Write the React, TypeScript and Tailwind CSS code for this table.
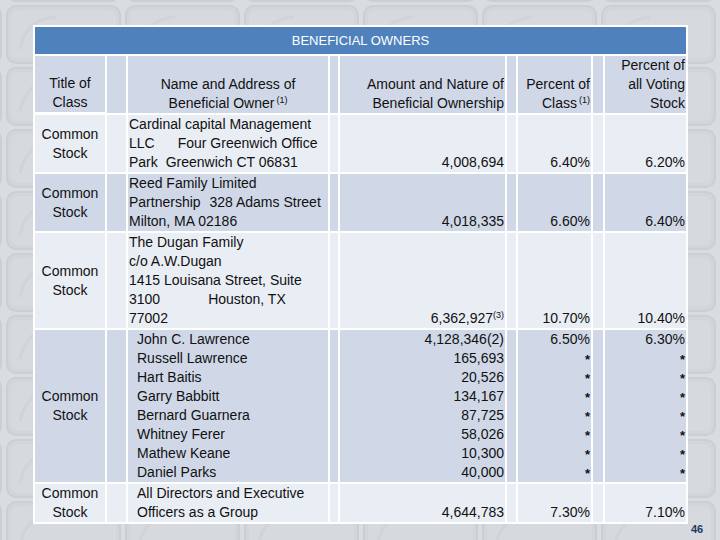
import React from "react";

const F = { fontFamily: '"Liberation Sans", Arial, sans-serif' };

function Bg() {
  return (
    <svg className="absolute inset-0" width="720" height="540">
      <defs>
        <pattern id="tiles" x="6" y="5" width="119" height="62" patternUnits="userSpaceOnUse">
          <rect x="1" y="1" width="113" height="57" rx="9" fill="#cdd1d7" stroke="#bfc4cb" strokeWidth="2" />
          <rect x="5" y="5" width="105" height="49" rx="7" fill="#d3d6dc" />
          <path d="M14 44 Q20 14 50 12" stroke="#c8ccd2" strokeWidth="3" fill="none" />
        </pattern>
      </defs>
      <rect width="720" height="540" fill="#d9dce0" />
      <rect width="720" height="540" fill="url(#tiles)" opacity="0.55" />
    </svg>
  );
}

const dark = "bg-[#d0d8e8]";
const light = "bg-[#e9edf4]";

function Sup({ t, tight = false }: { t: string; tight?: boolean }) {
  return <sup className={"text-[9px] -top-[5px] " + (tight ? "ml-0" : "ml-[2px]")}>{t}</sup>;
}

function Lines({ items, className = "" }: { items: React.ReactNode[]; className?: string }) {
  return (
    <>
      {items.map((it, i) => (
        <div key={i} className={"h-[19px] whitespace-pre " + className}>
          {it}
        </div>
      ))}
    </>
  );
}

function Row({
  bg,
  h,
  c1,
  c3,
  c5,
  c7,
  c9,
  top = false,
  indent = false,
}: {
  bg: string;
  h: string;
  c1: React.ReactNode;
  c3: React.ReactNode;
  c5: React.ReactNode;
  c7: React.ReactNode;
  c9: React.ReactNode;
  top?: boolean;
  indent?: boolean;
}) {
  const v = top ? "justify-start" : "justify-end";
  return (
    <>
      <div className={`${bg} ${h} flex flex-col justify-center items-center text-center`}>{c1}</div>
      <div className={`${bg} ${h}`} />
      <div className={`${bg} ${h} flex flex-col ${indent ? "pl-[9px]" : "pl-[1px]"}`}>{c3}</div>
      <div className={`${bg} ${h}`} />
      <div className={`${bg} ${h} flex flex-col ${v} items-end pr-[1px]`}>{c5}</div>
      <div className={`${bg} ${h}`} />
      <div className={`${bg} ${h} flex flex-col ${v} items-end pr-[1px]`}>{c7}</div>
      <div className={`${bg} ${h}`} />
      <div className={`${bg} ${h} flex flex-col ${v} items-end pr-[1px]`}>{c9}</div>
    </>
  );
}

const common = <Lines items={["Common", "Stock"]} />;

export default function App() {
  const star = <span className="relative top-[1px] text-[13px] font-bold">*</span>;
  return (
    <div className="relative w-[720px] h-[540px] overflow-hidden" style={F}>
      <Bg />
      <div className="relative pt-[25px] pl-[33px]">
        <div className="w-[655px] bg-white p-[2px] text-[14px] leading-[19px] text-[#111]">
          <div className="h-[27px] bg-[#4f81bd] text-white text-[13px] flex items-center justify-center mb-[2px]">
            BENEFICIAL OWNERS
          </div>
          <div className="grid grid-cols-[70px_19px_200px_8px_165px_9px_73px_10px_81px] gap-[2px]">
            {/* header */}
            <div className={`${dark} h-[56px] flex flex-col justify-end items-center text-center`}>
              <Lines items={["Title of", "Class"]} />
            </div>
            <div className={`${dark}`} />
            <div className={`${dark} flex flex-col justify-end items-center text-center`}>
              <Lines items={["Name and Address of", <>Beneficial Owner<Sup t="(1)" /></>]} />
            </div>
            <div className={`${dark}`} />
            <div className={`${dark} flex flex-col justify-end items-end pr-[1px] text-right`}>
              <Lines items={["Amount and Nature of", "Beneficial Ownership"]} />
            </div>
            <div className={`${dark}`} />
            <div className={`${dark} flex flex-col justify-end items-end pr-[1px] text-right`}>
              <Lines items={["Percent of", <>Class<Sup t="(1)" /></>]} />
            </div>
            <div className={`${dark}`} />
            <div className={`${dark} flex flex-col justify-end items-end pr-[1px] text-right`}>
              <Lines items={["Percent of", "all Voting", "Stock"]} />
            </div>

            <Row
              bg={light}
              h="h-[57px]"
              c1={common}
              c3={
                <Lines
                  items={[
                    "Cardinal capital Management",
                    <>LLC<span className="inline-block w-[23px]" />Four Greenwich Office</>,
                    <>Park<span className="inline-block w-[4px]" /> Greenwich CT 06831</>,
                  ]}
                />
              }
              c5={<Lines items={["4,008,694"]} />}
              c7={<Lines items={["6.40%"]} />}
              c9={<Lines items={["6.20%"]} />}
            />
            <Row
              bg={dark}
              h="h-[57px]"
              c1={common}
              c3={
                <Lines
                  items={[
                    "Reed Family Limited",
                    <>Partnership<span className="inline-block w-[5px]" /> 328 Adams Street</>,
                    "Milton, MA 02186",
                  ]}
                />
              }
              c5={<Lines items={["4,018,335"]} />}
              c7={<Lines items={["6.60%"]} />}
              c9={<Lines items={["6.40%"]} />}
            />
            <Row
              bg={light}
              h="h-[95px]"
              c1={common}
              c3={
                <Lines
                  items={[
                    "The Dugan Family",
                    "c/o A.W.Dugan",
                    "1415 Louisana Street, Suite",
                    <>3100<span className="inline-block w-[48px]" />Houston, TX</>,
                    "77002",
                  ]}
                />
              }
              c5={<Lines items={[<>6,362,927<Sup t="(3)" tight /></>]} />}
              c7={<Lines items={["10.70%"]} />}
              c9={<Lines items={["10.40%"]} />}
            />
            <Row
              bg={dark}
              h="h-[152px]"
              top
              indent
              c1={common}
              c3={
                <Lines
                  items={[
                    "John C. Lawrence",
                    "Russell Lawrence",
                    "Hart Baitis",
                    "Garry Babbitt",
                    "Bernard Guarnera",
                    "Whitney Ferer",
                    "Mathew Keane",
                    "Daniel Parks",
                  ]}
                />
              }
              c5={
                <Lines
                  className="text-right"
                  items={["4,128,346(2)", "165,693", "20,526", "134,167", "87,725", "58,026", "10,300", "40,000"]}
                />
              }
              c7={<Lines className="text-right" items={["6.50%", star, star, star, star, star, star, star]} />}
              c9={<Lines className="text-right" items={["6.30%", star, star, star, star, star, star, star]} />}
            />
            <Row
              bg={light}
              h="h-[38px]"
              indent
              c1={common}
              c3={<Lines items={["All Directors and Executive", "Officers as a Group"]} />}
              c5={<Lines items={["4,644,783"]} />}
              c7={<Lines items={["7.30%"]} />}
              c9={<Lines items={["7.10%"]} />}
            />
          </div>
        </div>
      </div>
      <div className="absolute left-[691px] top-[521px] text-[11px] font-bold text-[#1f3864]">46</div>
    </div>
  );
}
